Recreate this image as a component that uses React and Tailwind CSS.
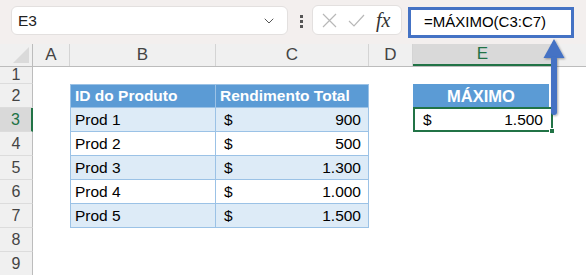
import { ChevronDown } from 'lucide-react';

const font = { fontFamily: '"Liberation Sans", Arial, sans-serif' };

const cols = [
  { key: 'A', w: 'w-[37px]' },
  { key: 'B', w: 'w-[146px]' },
  { key: 'C', w: 'w-[153px]' },
  { key: 'D', w: 'w-[44px]' },
  { key: 'E', w: 'w-[139px]' },
];

const products = [
  { id: 'Prod 1', total: '900' },
  { id: 'Prod 2', total: '500' },
  { id: 'Prod 3', total: '1.300' },
  { id: 'Prod 4', total: '1.000' },
  { id: 'Prod 5', total: '1.500' },
];

const RowHead = ({ n, h = 'h-[24px]', active }) => (
  <div
    className={`w-[33px] shrink-0 ${h} flex items-center justify-center border-b border-[#dcdcdc] text-[16px] ${
      active
        ? 'bg-[#d9d9d9] text-[#217346] border-r-2 border-r-[#217346]'
        : 'bg-[#f0f0f0] text-[#444] border-r border-r-[#bcbcbc]'
    }`}
  >
    {n}
  </div>
);

const FormulaBar = () => (
  <div className="h-[44px] bg-[#f3efee] flex items-start relative">
    <div className="ml-[11px] mt-[6px] w-[277px] h-[29px] bg-white rounded-[6px] border border-[#e3e0df] flex items-center pl-[6px] pr-[10px] justify-between">
      <span className="text-[15.5px] text-[#222]">E3</span>
      <ChevronDown size={16} strokeWidth={1.5} className="text-[#555]" />
    </div>
    <div className="ml-[12px] mt-[15px] flex flex-col gap-[2px]">
      <span className="w-[3px] h-[3px] bg-[#555]" />
      <span className="w-[3px] h-[3px] bg-[#555]" />
      <span className="w-[3px] h-[3px] bg-[#555]" />
    </div>
    <div className="ml-[9px] mt-[5px] w-[90px] h-[30px] bg-white rounded-[6px] border border-[#e3e0df] flex items-center pl-[9px] gap-[11px]">
      <svg width="15" height="15" viewBox="0 0 15 15" fill="none" stroke="#b8b8b8" strokeWidth="1.2">
        <path d="M1 1l13 13M14 1L1 14" />
      </svg>
      <svg width="17" height="13" viewBox="0 0 17 13" fill="none" stroke="#b8b8b8" strokeWidth="1.2">
        <path d="M1 7l5 5L16 1" />
      </svg>
      <span className="text-[20px] italic text-[#333] leading-none" style={{ fontFamily: '"Liberation Serif", serif' }}>
        fx
      </span>
    </div>
    <div className="ml-[6px] mt-[7px] w-[166px] h-[31px] bg-white border-[3px] border-[#4472c4] flex items-center pl-[13px]">
      <span className="text-[15px] text-black">=MÁXIMO(C3:C7)</span>
    </div>
  </div>
);

const ColumnHeads = () => (
  <div className="flex h-[23px] border-b border-[#bcbcbc] bg-[#f0f0f0]">
    <div className="w-[33px] shrink-0 relative border-r border-[#bcbcbc]">
      <div className="absolute right-[3px] bottom-[3px] w-0 h-0 border-l-[16px] border-l-transparent border-b-[16px] border-b-[#dadada]" />
    </div>
    {cols.map((c) => (
      <div
        key={c.key}
        className={`${c.w} shrink-0 flex items-center justify-center text-[17px] ${
          c.key === 'E'
            ? 'bg-[#d9d9d9] text-[#217346] border-b-2 border-[#217346]'
            : 'text-[#444] border-r border-[#d4d4d4]'
        }`}
      >
        {c.key}
      </div>
    ))}
    <div className="flex-1" />
  </div>
);

export default function App() {
  return (
    <div className="w-[586px] h-[275px] overflow-hidden bg-white relative" style={font}>
      <FormulaBar />
      <ColumnHeads />

      <div className="flex">
        <RowHead n="1" h="h-[17px]" />
      </div>

      <div className="flex">
        <RowHead n="2" />
        <div className="w-[37px]" />
        <div className="w-[146px] h-[24px] bg-[#5b9bd5] border border-[#9bc2e6] flex items-center pl-[4px] text-white font-bold text-[15.5px]">
          ID do Produto
        </div>
        <div className="w-[153px] h-[24px] bg-[#5b9bd5] border-y border-r border-[#9bc2e6] flex items-center pl-[4px] text-white font-bold text-[15.5px]">
          Rendimento Total
        </div>
        <div className="w-[44px]" />
        <div className="w-[136px] h-[24px] bg-[#5b9bd5] flex items-center justify-center text-white font-bold text-[16.5px]">
          MÁXIMO
        </div>
      </div>

      {products.map((p, i) => {
        const band = i % 2 === 0 ? 'bg-[#ddebf7]' : 'bg-white';
        return (
          <div key={p.id} className="flex">
            <RowHead n={i + 3} active={i === 0} />
            <div className="w-[37px]" />
            <div className={`w-[146px] h-[24px] ${band} border-x border-b border-[#9bc2e6] flex items-center pl-[4px] text-[15.5px] text-black`}>
              {p.id}
            </div>
            <div className={`w-[153px] h-[24px] ${band} border-r border-b border-[#9bc2e6] flex items-center justify-between pl-[8px] pr-[7px] text-[15.5px] text-black`}>
              <span>$</span>
              <span>{p.total}</span>
            </div>
            <div className="w-[44px]" />
            {i === 0 && (
              <div className="relative w-[140px] h-[25px] -mt-[1px] border-2 border-[#217346] flex items-center justify-between pl-[8px] pr-[8px] text-[15.5px] text-black">
                <span>$</span>
                <span>1.500</span>
                <span className="absolute -right-[4px] -bottom-[4px] w-[6px] h-[6px] bg-[#217346] border border-white" />
              </div>
            )}
          </div>
        );
      })}

      <div className="flex">
        <RowHead n="8" />
      </div>
      <div className="flex">
        <RowHead n="9" />
      </div>

      <svg className="absolute left-[540px] top-[36px]" width="28" height="84" viewBox="0 0 28 84">
        <defs>
          <filter id="sh" x="-50%" y="-20%" width="200%" height="140%">
            <feDropShadow dx="1" dy="1" stdDeviation="1" floodColor="#000" floodOpacity="0.35" />
          </filter>
        </defs>
        <g filter="url(#sh)">
          <path d="M14 3 L24.5 22 L3.5 22 Z" fill="#4472c4" />
          <rect x="11" y="20" width="6" height="59" rx="3" fill="#4472c4" />
        </g>
      </svg>
    </div>
  );
}
